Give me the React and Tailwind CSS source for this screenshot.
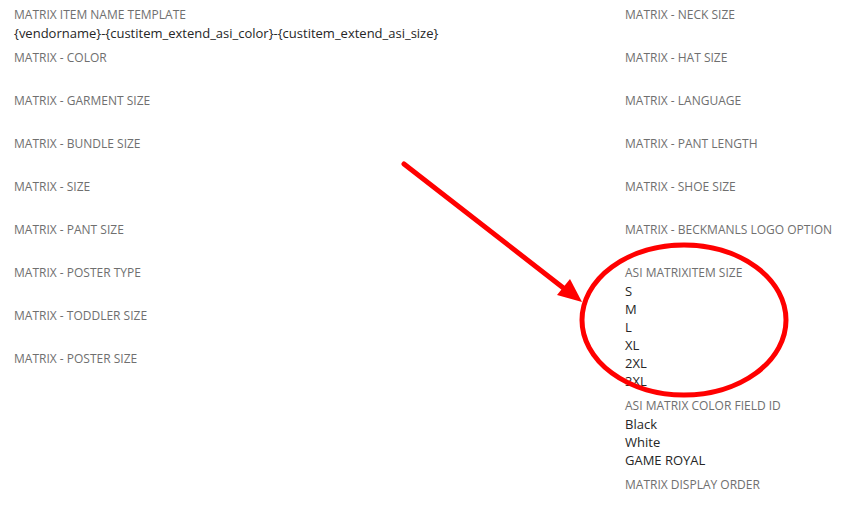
import React from 'react';

const leftFields = [
  { label: 'MATRIX ITEM NAME TEMPLATE', values: ['{vendorname}-{custitem_extend_asi_color}-{custitem_extend_asi_size}'] },
  { label: 'MATRIX - COLOR' },
  { label: 'MATRIX - GARMENT SIZE' },
  { label: 'MATRIX - BUNDLE SIZE' },
  { label: 'MATRIX - SIZE' },
  { label: 'MATRIX - PANT SIZE' },
  { label: 'MATRIX - POSTER TYPE' },
  { label: 'MATRIX - TODDLER SIZE' },
  { label: 'MATRIX - POSTER SIZE' },
];

const rightFields = [
  { label: 'MATRIX - NECK SIZE' },
  { label: 'MATRIX - HAT SIZE' },
  { label: 'MATRIX - LANGUAGE' },
  { label: 'MATRIX - PANT LENGTH' },
  { label: 'MATRIX - SHOE SIZE' },
  { label: 'MATRIX - BECKMANLS LOGO OPTION' },
  { label: 'ASI MATRIXITEM SIZE', values: ['S', 'M', 'L', 'XL', '2XL', '3XL'] },
  { label: 'ASI MATRIX COLOR FIELD ID', values: ['Black', 'White', 'GAME ROYAL'] },
  { label: 'MATRIX DISPLAY ORDER' },
];

const Field = ({ label, values = [] }) => (
  <div className="min-h-[43px] pb-[7px]">
    <div className="text-[12px] leading-[18px] text-[#6f6f6f] whitespace-nowrap">{label}</div>
    {values.map((v, i) => (
      <div key={i} className="text-[13px] leading-[18px] text-[#262626] whitespace-nowrap">
        {v}
      </div>
    ))}
  </div>
);

export default function App() {
  return (
    <div className="relative w-[866px] h-[512px] bg-white overflow-hidden font-['Open_Sans',sans-serif]">
      <div className="grid grid-cols-[611px_1fr] pl-[14px] pt-[6px]">
        <div className="flex flex-col">
          {leftFields.map((f, i) => (
            <Field key={i} {...f} />
          ))}
        </div>
        <div className="flex flex-col">
          {rightFields.map((f, i) => (
            <Field key={i} {...f} />
          ))}
        </div>
      </div>

      {/* red annotation */}
      <svg className="absolute inset-0 pointer-events-none" width="866" height="512" viewBox="0 0 866 512">
        <line x1="404" y1="164" x2="566" y2="290" stroke="#f00" strokeWidth="5" strokeLinecap="round" />
        <polygon points="582,302 557,295 570,279" fill="#f00" />
        <ellipse cx="684" cy="320" rx="102" ry="75" fill="none" stroke="#f00" strokeWidth="5" />
      </svg>
    </div>
  );
}
